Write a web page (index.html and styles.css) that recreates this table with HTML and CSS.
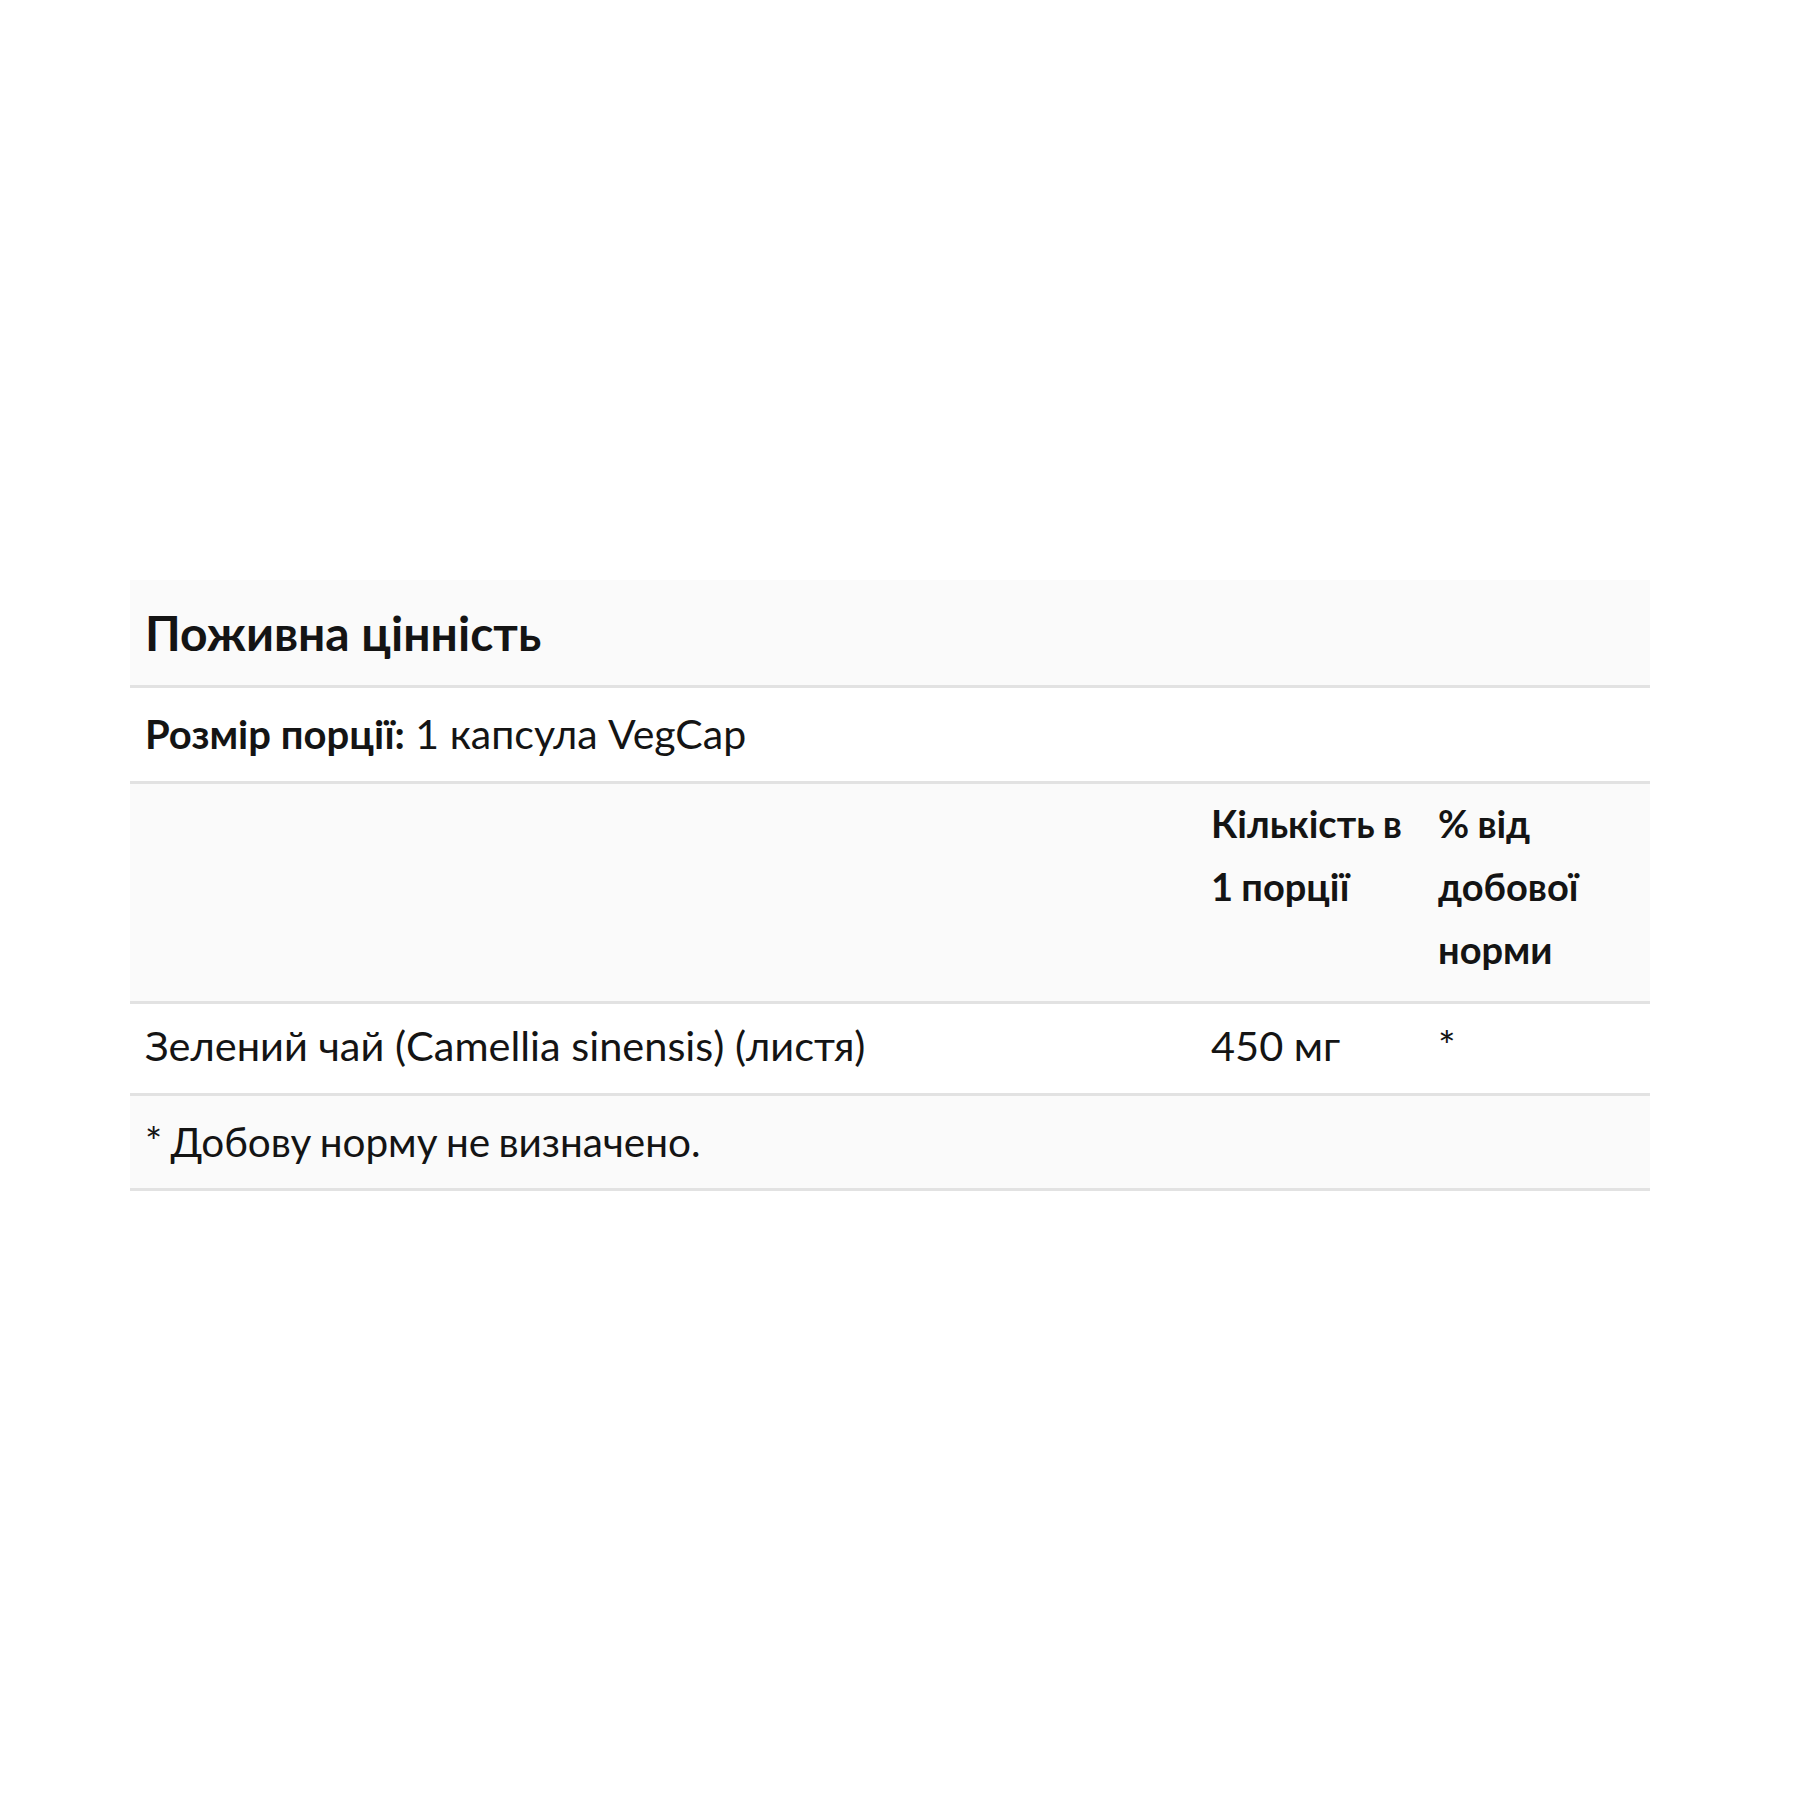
FILE: index.html
```html
<!DOCTYPE html>
<html lang="uk">
<head>
<meta charset="utf-8">
<title>Поживна цінність</title>
<link rel="stylesheet" href="styles.css">
</head>
<body>
<div class="page">
  <table class="facts">
    <colgroup>
      <col class="c-name">
      <col class="c-amt">
      <col class="c-dv">
    </colgroup>
    <tbody>
      <tr class="row gray title-row">
        <td colspan="3" class="title">Поживна цінність</td>
      </tr>
      <tr class="row serving">
        <td colspan="3"><b>Розмір порції:</b> 1 капсула VegCap</td>
      </tr>
      <tr class="row gray head-row">
        <td></td>
        <td class="bold">Кількість в 1 порції</td>
        <td class="bold">% від добової норми</td>
      </tr>
      <tr class="row item">
        <td>Зелений чай (Camellia sinensis) (листя)</td>
        <td>450 мг</td>
        <td class="star">*</td>
      </tr>
      <tr class="row gray foot">
        <td colspan="3">* Добову норму не визначено.</td>
      </tr>
    </tbody>
  </table>
</div>
</body>
</html>
```

FILE: styles.css
```css
html, body {
  margin: 0;
  padding: 0;
  background: #ffffff;
}

.page {
  padding: 580px 150px 0 130px;
  font-family: Lato, "Liberation Sans", sans-serif;
  color: #141414;
}

.facts {
  width: 1520px;
  border-collapse: collapse;
  table-layout: fixed;
  font-size: 41px;
  line-height: 63px;
}

.c-name { width: 1066px; }
.c-amt { width: 227px; }
.c-dv { width: 227px; }

.row td {
  padding: 13px 15px;
  border-bottom: 3px solid #e2e2e2;
  vertical-align: top;
  text-align: left;
  white-space: normal;
}

.gray td {
  background: #fafafa;
}

.title {
  font-size: 48px;
  font-weight: 700;
  line-height: 62px;
  padding-top: 22px !important;
  padding-bottom: 21px !important;
}

.serving td {
  padding-top: 14px;
  padding-bottom: 15px;
}

.serving b {
  font-size: 40px;
}

.head-row td {
  padding-top: 8px;
  padding-bottom: 20px;
  font-size: 38px;
  word-spacing: -1px;
}

.item td {
  padding-top: 10px;
  padding-bottom: 16px;
  font-size: 41.5px;
}

.foot td {
  padding-top: 14px;
  padding-bottom: 15px;
  font-size: 40.5px;
  word-spacing: -2px;
}

.bold, b {
  font-weight: 700;
}
```
